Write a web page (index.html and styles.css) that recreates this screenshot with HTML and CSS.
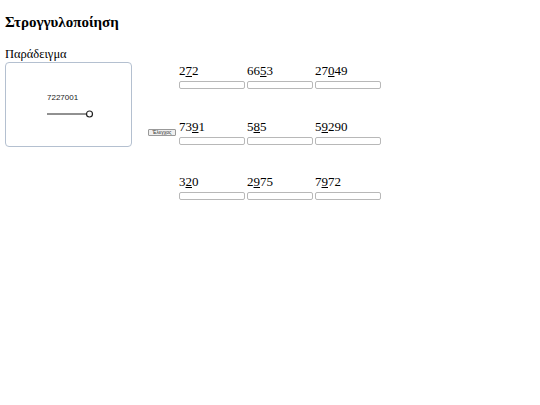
FILE: index.html
```html
<!DOCTYPE html>
<html lang="el">
<head>
<meta charset="utf-8">
<title>Στρογγυλοποίηση</title>
<link rel="stylesheet" href="styles.css">
</head>
<body>
<h1 class="title">Στρογγυλοποίηση</h1>
<div class="main">
  <div class="example">
    <div class="label">Παράδειγμα</div>
    <div class="box">
      <div class="sample">7227001</div>
      <svg class="slider" width="50" height="10" viewBox="0 0 50 10">
        <line x1="0" y1="5" x2="39" y2="5" stroke="#222" stroke-width="1"/>
        <circle cx="42.5" cy="5" r="3" fill="#fff" stroke="#222" stroke-width="1.2"/>
      </svg>
    </div>
  </div>
  <div class="check"><button class="btn">Έλεγχος</button></div>
  <div class="grid">
    <div class="cell"><div class="num">2<u>7</u>2</div><input class="ans" type="text"></div>
    <div class="cell"><div class="num">66<u>5</u>3</div><input class="ans" type="text"></div>
    <div class="cell"><div class="num">27<u>0</u>49</div><input class="ans" type="text"></div>
    <div class="cell"><div class="num">73<u>9</u>1</div><input class="ans" type="text"></div>
    <div class="cell"><div class="num">5<u>8</u>5</div><input class="ans" type="text"></div>
    <div class="cell"><div class="num">5<u>9</u>290</div><input class="ans" type="text"></div>
    <div class="cell"><div class="num">3<u>2</u>0</div><input class="ans" type="text"></div>
    <div class="cell"><div class="num">2<u>9</u>75</div><input class="ans" type="text"></div>
    <div class="cell"><div class="num">7<u>9</u>72</div><input class="ans" type="text"></div>
  </div>
</div>
</body>
</html>
```
FILE: styles.css
```css
html, body {
  margin: 0;
  padding: 0;
  background: #fff;
}
body {
  font-family: "Liberation Serif", "Times New Roman", serif;
  color: #000;
  padding: 0 5px;
}
.title {
  font-size: 15px;
  font-weight: bold;
  margin: 0;
  padding-top: 14px;
  line-height: 17px;
  height: 17px;
}
.main {
  display: flex;
  align-items: flex-start;
  margin-top: 16px;
}
.example {
  width: 127px;
  flex: none;
}
.label {
  font-size: 12.5px;
  line-height: 15px;
  height: 15px;
}
.box {
  box-sizing: border-box;
  height: 85px;
  border: 1px solid #b4c0d0;
  border-radius: 4px;
  padding: 30px 0 0 41px;
}
.sample {
  font-family: "Liberation Sans", Arial, sans-serif;
  font-size: 8px;
  line-height: 9px;
  color: #222;
}
.slider {
  display: block;
  margin-top: 7px;
}
.check {
  flex: none;
  margin-left: 16px;
  margin-top: 82px;
}
.btn {
  display: block;
  box-sizing: border-box;
  width: 28px;
  height: 7px;
  padding: 0;
  font-family: "Liberation Sans", Arial, sans-serif;
  font-size: 5px;
  line-height: 5px;
  color: #333;
  background: #efefef;
  border: 1px solid #999;
  border-radius: 1px;
}
.grid {
  flex: none;
  margin-left: 3px;
  margin-top: 16px;
  display: grid;
  grid-template-columns: repeat(3, 66px);
  column-gap: 2px;
  row-gap: 29.5px;
}
.num {
  font-size: 13px;
  line-height: 15px;
  height: 15px;
}
.ans {
  display: block;
  box-sizing: border-box;
  width: 66px;
  height: 8px;
  margin: 3px 0 0;
  padding: 0;
  border: 1px solid #b8b8b8;
  border-radius: 2px;
  background: #fff;
}
```
